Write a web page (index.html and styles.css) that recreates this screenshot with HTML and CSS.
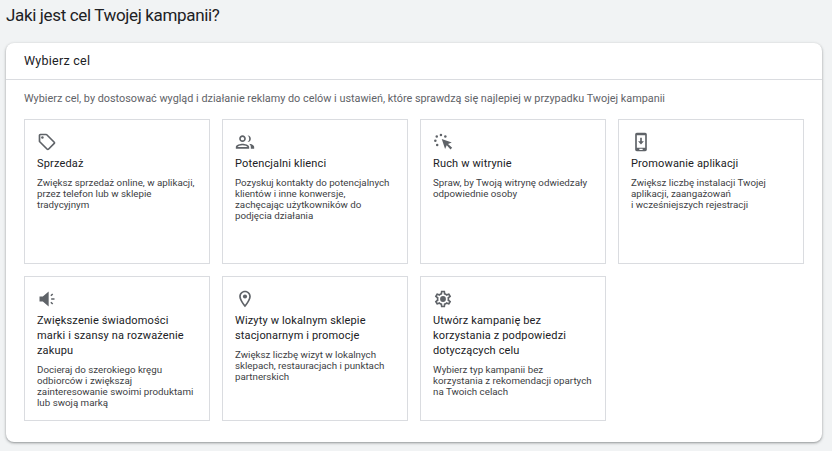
FILE: index.html
```html
<!DOCTYPE html>
<html lang="pl">
<head>
    <meta charset="UTF-8">
    <meta name="viewport" content="width=device-width, initial-scale=1.0">
    <title>Jaki jest cel Twojej kampanii?</title>
    <link rel="stylesheet" href="styles.css">
</head>
<body>
    <h1 class="page-title">Jaki jest cel Twojej kampanii?</h1>

    <section class="goal-card">
        <h2 class="goal-card-header">Wybierz cel</h2>
        <div class="goal-card-body">
            <p class="goal-intro">Wybierz cel, by dostosować wygląd i działanie reklamy do celów i ustawień, które sprawdzą się najlepiej w przypadku Twojej kampanii</p>

            <div class="goal-grid">
                <!-- Sprzedaż -->
                <div class="goal-tile">
                    <svg class="goal-icon" viewBox="0 0 24 24"><path d="M21.41 11.58l-9-9C12.05 2.22 11.55 2 11 2H4c-1.100 0-2 .9-2 2v7c0 .55.22 1.050.59 1.420l9 9c.36.36.86.58 1.410.58s1.050-.22 1.410-.59l7-7c.37-.36.59-.86.59-1.410s-.23-1.060-.59-1.420zM13 20.010L4 11V4h7v-.01l9 9-7 7.020z"/><circle cx="6.500" cy="6.500" r="1.500"/></svg>
                    <h3 class="goal-title">Sprzedaż</h3>
                    <p class="goal-desc">Zwiększ sprzedaż online, w aplikacji,<br>przez telefon lub w sklepie<br>tradycyjnym</p>
                </div>

                <!-- Potencjalni klienci -->
                <div class="goal-tile">
                    <svg class="goal-icon" viewBox="0 0 24 24"><path d="M9 12c2.200 0 4-1.800 4-4s-1.800-4-4-4-4 1.800-4 4 1.800 4 4 4zm0-6c1.100 0 2 .9 2 2s-.9 2-2 2-2-.9-2-2 .9-2 2-2zm0 8c-2.700 0-8 1.300-8 4v2h16v-2c0-2.700-5.300-4-8-4zm-6 4c.2-.7 3.300-2 6-2s5.800 1.300 6 2H3zM15 4.100c1.300.6 2 2.300 2 3.900s-.7 3.300-2 3.900c2.300.4 4-1.700 4-3.900s-1.700-4.300-4-3.900zM16.500 14.200c1.500.9 2.500 2.200 2.500 3.800v2h4v-2c0-2.300-3.300-3.500-6.500-3.800z"/></svg>
                    <h3 class="goal-title">Potencjalni klienci</h3>
                    <p class="goal-desc">Pozyskuj kontakty do potencjalnych<br>klientów i inne konwersje,<br>zachęcając użytkowników do<br>podjęcia działania</p>
                </div>

                <!-- Ruch w witrynie -->
                <div class="goal-tile">
                    <svg class="goal-icon" viewBox="0 0 24 24"><path d="M10.500 8.500l4 12 2-4.500 4.500 5 2-2-5-4.500 4.500-2z"/><circle cx="9.500" cy="3.500" r="1.500"/><circle cx="4.500" cy="5.500" r="1.500"/><circle cx="2.800" cy="10.500" r="1.500"/><circle cx="5" cy="15.500" r="1.500"/><circle cx="14.800" cy="5.500" r="1.500"/></svg>
                    <h3 class="goal-title">Ruch w witrynie</h3>
                    <p class="goal-desc">Spraw, by Twoją witrynę odwiedzały<br>odpowiednie osoby</p>
                </div>

                <!-- Promowanie aplikacji -->
                <div class="goal-tile">
                    <svg class="goal-icon" viewBox="0 0 24 24"><path fill-rule="evenodd" d="M7 1h10c1.100 0 2 .9 2 2v18c0 1.100-.9 2-2 2H7c-1.100 0-2-.9-2-2V3c0-1.100.9-2 2-2zm0 3v15h10V4H7zm3 16v1.500h4V20h-4z"/><path d="M11 7h2v4h2.500L12 15l-3.500-4H11z"/></svg>
                    <h3 class="goal-title">Promowanie aplikacji</h3>
                    <p class="goal-desc">Zwiększ liczbę instalacji Twojej<br>aplikacji, zaangażowań<br>i wcześniejszych rejestracji</p>
                </div>

                <!-- Świadomość marki -->
                <div class="goal-tile">
                    <svg class="goal-icon" viewBox="0 0 24 24"><path d="M3 9v6h4l7 6V3L7 9H3z"/><path d="M16 7.500l2.200-2.200 1.300 1.300-2.200 2.200zM17 11h4v2h-4zM16 16.500l1.300-1.300 2.200 2.200-1.300 1.300z"/></svg>
                    <h3 class="goal-title">Zwiększenie świadomości marki i szansy na rozważenie zakupu</h3>
                    <p class="goal-desc">Docieraj do szerokiego kręgu<br>odbiorców i zwiększaj<br>zainteresowanie swoimi produktami<br>lub swoją marką</p>
                </div>

                <!-- Wizyty w sklepie -->
                <div class="goal-tile">
                    <svg class="goal-icon" viewBox="0 0 24 24"><path d="M12 2C8.100 2 5 5.100 5 9c0 5.200 7 13 7 13s7-7.800 7-13c0-3.900-3.100-7-7-7zm0 17c-2-2.600-5-7-5-10 0-2.800 2.200-5 5-5s5 2.200 5 5c0 3-3 7.400-5 10z"/><circle cx="12" cy="9" r="2.500"/></svg>
                    <h3 class="goal-title">Wizyty w lokalnym sklepie stacjonarnym i promocje</h3>
                    <p class="goal-desc">Zwiększ liczbę wizyt w lokalnych<br>sklepach, restauracjach i punktach<br>partnerskich</p>
                </div>

                <!-- Bez podpowiedzi -->
                <div class="goal-tile">
                    <svg class="goal-icon" viewBox="0 0 24 24"><path d="M19.430 12.980c.04-.32.07-.64.07-.98s-.03-.66-.07-.98l2.110-1.650c.19-.15.24-.42.12-.64l-2-3.460c-.12-.22-.39-.3-.61-.22l-2.490 1c-.52-.4-1.080-.73-1.690-.98l-.38-2.650C14.460 2.180 14.250 2 14 2h-4c-.25 0-.46.18-.49.42l-.38 2.650c-.61.25-1.170.59-1.690.98l-2.490-1c-.23-.09-.49 0-.61.22l-2 3.460c-.13.22-.07.49.12.64l2.110 1.650c-.04.32-.07.65-.07.98s.03.66.07.98l-2.110 1.650c-.19.15-.24.42-.12.64l2 3.460c.12.22.39.3.61.22l2.490-1c.52.4 1.080.73 1.690.98l.38 2.650c.03.24.24.42.49.42h4c.25 0 .46-.18.49-.42l.38-2.650c.61-.25 1.170-.59 1.690-.98l2.490 1c.23.09.49 0 .61-.22l2-3.460c.12-.22.07-.49-.12-.64l-2.110-1.650zM17.450 11.270c.04.31.05.52.05.73s-.02.43-.05.73l-.14 1.130.89.7 1.080.84-.7 1.210-1.270-.51-1.040-.42-.9.68c-.43.32-.84.56-1.250.73l-1.060.43-.16 1.130-.2 1.350h-1.400l-.19-1.350-.16-1.130-1.060-.43c-.43-.18-.83-.41-1.230-.71l-.91-.7-1.060.43-1.270.51-.7-1.210 1.080-.84.89-.7-.14-1.130c-.03-.31-.05-.54-.05-.74s.02-.43.05-.73l.14-1.130-.89-.7-1.080-.84.7-1.210 1.270.51 1.040.42.9-.68c.43-.32.84-.56 1.250-.73l1.060-.43.16-1.130.2-1.350h1.390l.19 1.350.16 1.130 1.060.43c.43.18.83.41 1.230.71l.91.7 1.060-.43 1.270-.51.7 1.210-1.070.85-.89.7.14 1.130z"/><circle cx="12" cy="12" r="3.500"/></svg>
                    <h3 class="goal-title">Utwórz kampanię bez korzystania z podpowiedzi dotyczących celu</h3>
                    <p class="goal-desc">Wybierz typ kampanii bez<br>korzystania z rekomendacji opartych<br>na Twoich celach</p>
                </div>
            </div>
        </div>
    </section>
</body>
</html>
```

FILE: styles.css
```css
body {
    font-family: Roboto, Arial, sans-serif;
    background-color: #f1f3f4;
    margin: 0;
    padding: 0 10px 0 6px;
    height: 451px;
    overflow: hidden;
    color: #202124;
}

.page-title {
    margin: 0;
    padding-top: 3px;
    height: 43px;
    box-sizing: border-box;
    font-size: 17px;
    line-height: 24px;
    font-weight: 400;
    letter-spacing: -0.35px;
}

.goal-card {
    height: 399px;
    box-sizing: border-box;
    background-color: #ffffff;
    border-radius: 8px;
    box-shadow: 0 1px 2px rgba(60, 64, 67, 0.4), 0 1px 3px 1px rgba(60, 64, 67, 0.12);
}

.goal-card-header {
    margin: 0;
    height: 37px;
    box-sizing: border-box;
    padding: 10px 18px 0;
    font-size: 12.5px;
    line-height: 16px;
    font-weight: 450;
    letter-spacing: 0.25px;
    border-bottom: 1px solid #dadce0;
}

.goal-card-body {
    padding: 11px 18px 0;
}

.goal-intro {
    margin: 0 0 12px;
    font-size: 10.85px;
    line-height: 16px;
    color: #5f6368;
}

.goal-grid {
    display: grid;
    grid-template-columns: repeat(4, 186px);
    grid-auto-rows: 145px;
    gap: 12px;
}

.goal-tile {
    box-sizing: border-box;
    padding: 12px 12px 0;
    border: 1px solid #dadce0;
}

.goal-icon {
    display: block;
    width: 20px;
    height: 20px;
    fill: #5f6368;
}

.goal-title {
    margin: 4px 0 0;
    font-size: 11px;
    line-height: 15px;
    font-weight: 450;
    letter-spacing: 0.15px;
}

.goal-desc {
    margin: 6px 0 0;
    font-size: 9.75px;
    line-height: 11px;
    color: #3c4043;
    white-space: nowrap;
}
```
